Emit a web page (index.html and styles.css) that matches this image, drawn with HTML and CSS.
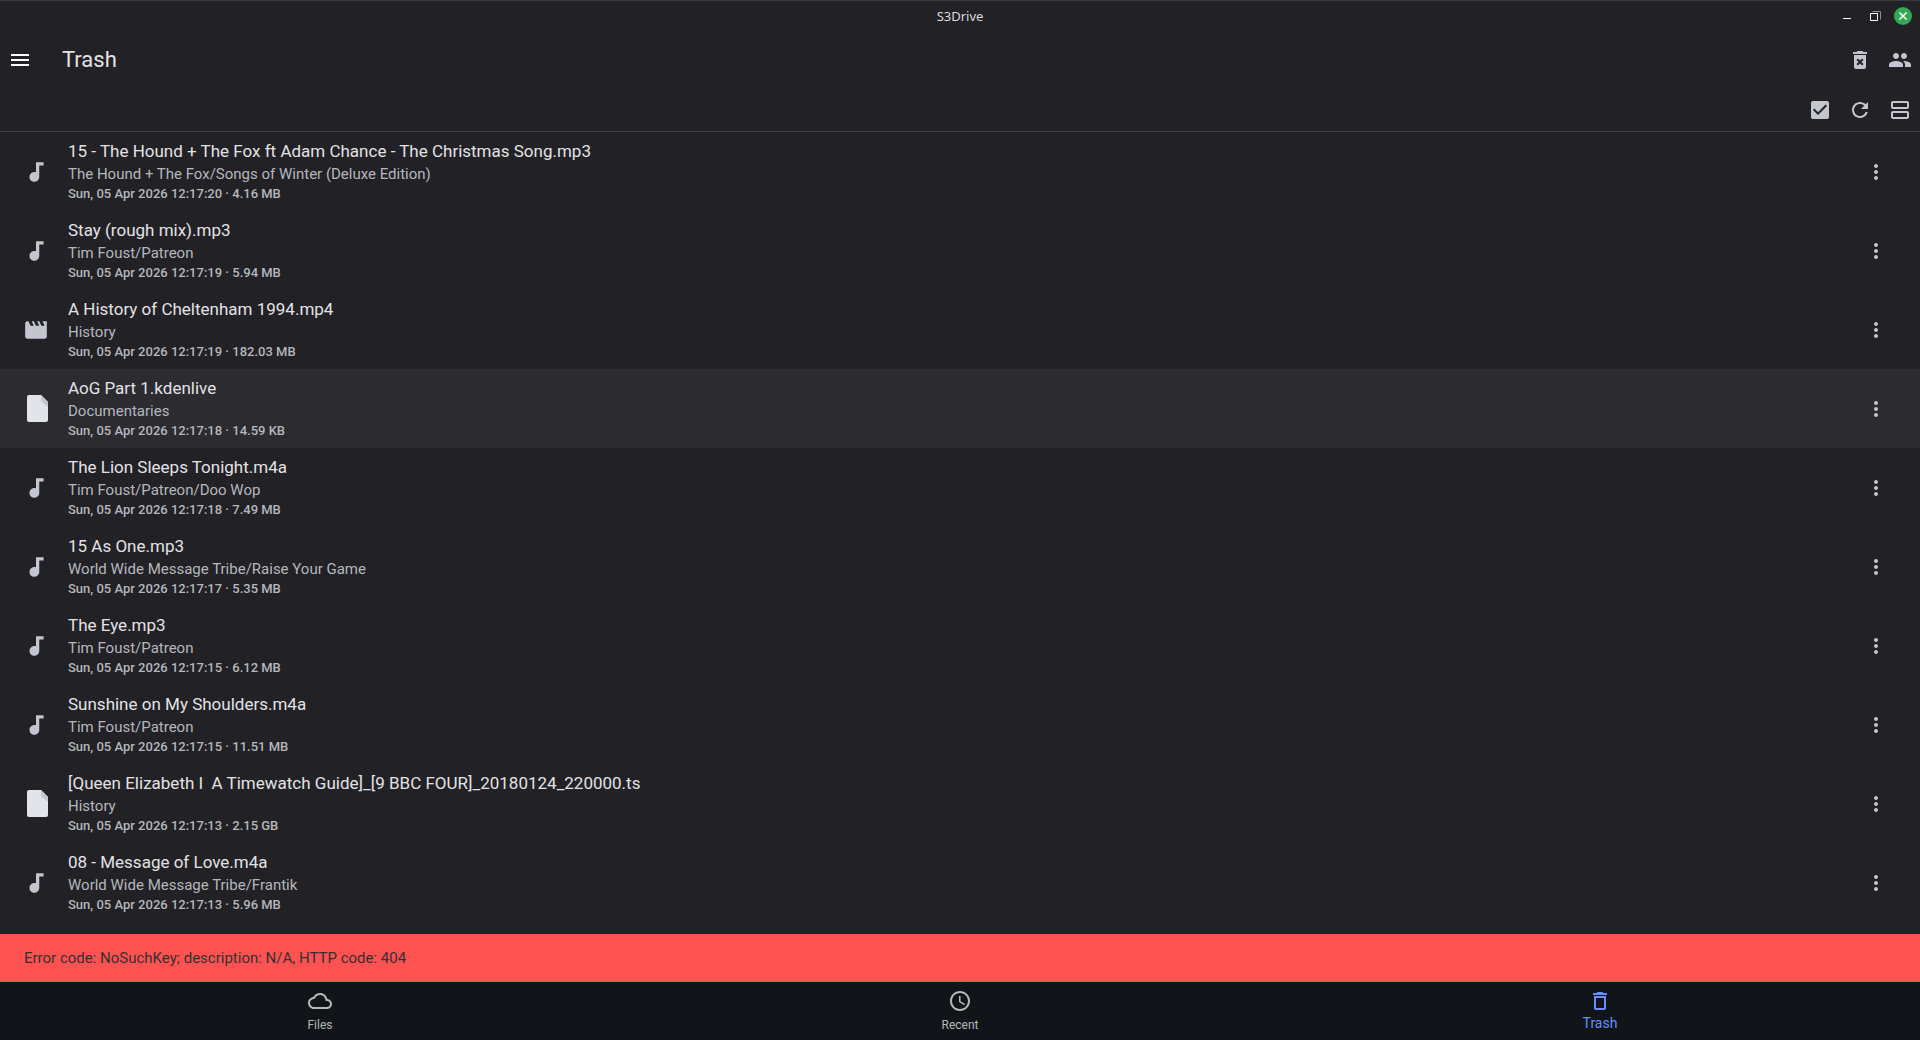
FILE: index.html
```html
<!DOCTYPE html>
<html lang="en">
  <head>
    <meta charset="UTF-8" />
    <meta name="viewport" content="width=device-width, initial-scale=1.0" />
    <title>S3Drive</title>
    <link rel="stylesheet" href="styles.css">
  </head>
  <body>
    <!-- Icons shared by the rows -->
    <svg class="sprite" aria-hidden="true">
      <symbol id="audio" viewBox="0 0 24 24">
        <path d="M12 3v9.28c-.47-.17-.97-.28-1.5-.28C8.01 12 6 14.01 6 16.5S8.01 21 10.5 21c2.31 0 4.2-1.75 4.45-4H15V6h4V3h-7z" />
      </symbol>
      <symbol id="movie" viewBox="0 0 24 24">
        <path d="M18 4l2 4h-3l-2-4h-2l2 4h-3l-2-4H8l2 4H7L5 4H4c-1.1 0-1.99.9-1.99 2L2 18c0 1.1.9 2 2 2h16c1.1 0 2-.9 2-2V4h-4z" />
      </symbol>
      <symbol id="file" viewBox="0 0 21 27">
        <path d="M2 0h12l7 7v18a2 2 0 0 1-2 2H2a2 2 0 0 1-2-2V2a2 2 0 0 1 2-2z" fill="#e1e5e9" />
        <path d="M14 0l7 7v5l-7-6z" fill="#c3c8d2" />
      </symbol>
      <symbol id="dots" viewBox="0 0 24 24">
        <path d="M12 8c1.1 0 2-.9 2-2s-.9-2-2-2-2 .9-2 2 .9 2 2 2zm0 2c-1.1 0-2 .9-2 2s.9 2 2 2 2-.9 2-2-.9-2-2-2zm0 6c-1.1 0-2 .9-2 2s.9 2 2 2 2-.9 2-2-.9-2-2-2z" />
      </symbol>
    </svg>

    <div class="titlebar">
      <span class="window-title">S3Drive</span>
      <div class="window-buttons">
        <button type="button" aria-label="Minimize">
          <svg width="18" height="18" viewBox="0 0 18 18"><path d="M5 11h8v1H5z" /></svg>
        </button>
        <button type="button" aria-label="Restore">
          <svg width="18" height="18" viewBox="0 0 18 18">
            <path d="M6.500 4.500h8v8" fill="none" stroke="#8b8b8f" />
            <path d="M4.500 6.500h7v7h-7z" fill="none" stroke="#ffffff" />
          </svg>
        </button>
        <button type="button" aria-label="Close">
          <svg width="18" height="18" viewBox="0 0 18 18">
            <circle cx="9" cy="9" r="9" fill="#33a852" />
            <path d="M5.500 5.500l7 7M12.500 5.500l-7 7" stroke="#ffffff" stroke-width="1.500" />
          </svg>
        </button>
      </div>
    </div>

    <header>
      <div class="bar">
        <button type="button" class="icon-button menu" aria-label="Open menu">
          <svg viewBox="0 0 24 24"><path d="M3 18h18v-2H3v2zm0-5h18v-2H3v2zm0-7v2h18V6H3z" /></svg>
        </button>
        <h1>Trash</h1>
        <button type="button" class="icon-button" aria-label="Empty trash">
          <svg viewBox="0 0 24 24">
            <path fill-rule="evenodd" d="M6 19c0 1.100.9 2 2 2h8c1.100 0 2-.9 2-2V7H6v12zM8.460 11.880l1.410-1.410L12 12.590l2.120-2.120 1.410 1.410L13.410 14l2.120 2.120-1.410 1.410L12 15.410l-2.120 2.120-1.410-1.410L10.590 14l-2.130-2.120zM15.500 4l-1-1h-5l-1 1H5v2h14V4z" />
          </svg>
        </button>
        <button type="button" class="icon-button" aria-label="Shared">
          <svg viewBox="0 0 24 24">
            <path d="M16 11c1.660 0 2.990-1.340 2.990-3S17.660 5 16 5c-1.660 0-3 1.340-3 3s1.340 3 3 3zm-8 0c1.660 0 2.990-1.340 2.990-3S9.660 5 8 5C6.340 5 5 6.340 5 8s1.340 3 3 3zm0 2c-2.330 0-7 1.170-7 3.500V19h14v-2.500c0-2.330-4.670-3.500-7-3.500zm8 0c-.29 0-.62.02-.97.05 1.160.84 1.970 1.970 1.970 3.450V19h6v-2.500c0-2.330-4.670-3.500-7-3.500z" />
          </svg>
        </button>
      </div>
      <div class="bar tools">
        <label class="icon-button">
          <input type="checkbox" aria-label="Select all" checked />
          <svg viewBox="0 0 24 24">
            <path d="M19 3H5c-1.110 0-2 .9-2 2v14c0 1.100.89 2 2 2h14c1.110 0 2-.9 2-2V5c0-1.100-.89-2-2-2zm-9 14l-5-5 1.410-1.410L10 14.170l7.590-7.590L19 8l-9 9z" />
          </svg>
        </label>
        <button type="button" class="icon-button" aria-label="Refresh">
          <svg viewBox="0 0 24 24">
            <path d="M17.650 6.350C16.200 4.900 14.210 4 12 4c-4.420 0-7.990 3.580-7.990 8s3.570 8 7.990 8c3.730 0 6.840-2.550 7.730-6h-2.080c-.82 2.330-3.040 4-5.650 4-3.310 0-6-2.690-6-6s2.690-6 6-6c1.660 0 3.140.69 4.220 1.780L13 11h7V4l-2.350 2.350z" />
          </svg>
        </button>
        <button type="button" class="icon-button" aria-label="Change view">
          <svg viewBox="0 0 24 24">
            <path fill-rule="evenodd" d="M19 13H5c-1.100 0-2 .9-2 2v4c0 1.100.9 2 2 2h14c1.100 0 2-.9 2-2v-4c0-1.100-.9-2-2-2zm0 6H5v-4h14v4zM19 3H5c-1.100 0-2 .9-2 2v4c0 1.100.9 2 2 2h14c1.100 0 2-.9 2-2V5c0-1.100-.9-2-2-2zm0 6H5V5h14v4z" />
          </svg>
        </button>
      </div>
    </header>

    <main>
      <ul class="file-list">
        <li>
          <svg class="type"><use href="#audio" /></svg>
          <div class="info">
            <h2>15 - The Hound + The Fox ft Adam Chance - The Christmas Song.mp3</h2>
            <p class="folder">The Hound + The Fox/Songs of Winter (Deluxe Edition)</p>
            <p class="details">Sun, 05 Apr 2026 12:17:20 · 4.16 MB</p>
          </div>
          <button type="button" class="icon-button" aria-label="More"><svg><use href="#dots" /></svg></button>
        </li>
        <li>
          <svg class="type"><use href="#audio" /></svg>
          <div class="info">
            <h2>Stay (rough mix).mp3</h2>
            <p class="folder">Tim Foust/Patreon</p>
            <p class="details">Sun, 05 Apr 2026 12:17:19 · 5.94 MB</p>
          </div>
          <button type="button" class="icon-button" aria-label="More"><svg><use href="#dots" /></svg></button>
        </li>
        <li>
          <svg class="type"><use href="#movie" /></svg>
          <div class="info">
            <h2>A History of Cheltenham 1994.mp4</h2>
            <p class="folder">History</p>
            <p class="details">Sun, 05 Apr 2026 12:17:19 · 182.03 MB</p>
          </div>
          <button type="button" class="icon-button" aria-label="More"><svg><use href="#dots" /></svg></button>
        </li>
        <li class="active">
          <svg class="type document"><use href="#file" /></svg>
          <div class="info">
            <h2>AoG Part 1.kdenlive</h2>
            <p class="folder">Documentaries</p>
            <p class="details">Sun, 05 Apr 2026 12:17:18 · 14.59 KB</p>
          </div>
          <button type="button" class="icon-button" aria-label="More"><svg><use href="#dots" /></svg></button>
        </li>
        <li>
          <svg class="type"><use href="#audio" /></svg>
          <div class="info">
            <h2>The Lion Sleeps Tonight.m4a</h2>
            <p class="folder">Tim Foust/Patreon/Doo Wop</p>
            <p class="details">Sun, 05 Apr 2026 12:17:18 · 7.49 MB</p>
          </div>
          <button type="button" class="icon-button" aria-label="More"><svg><use href="#dots" /></svg></button>
        </li>
        <li>
          <svg class="type"><use href="#audio" /></svg>
          <div class="info">
            <h2>15 As One.mp3</h2>
            <p class="folder">World Wide Message Tribe/Raise Your Game</p>
            <p class="details">Sun, 05 Apr 2026 12:17:17 · 5.35 MB</p>
          </div>
          <button type="button" class="icon-button" aria-label="More"><svg><use href="#dots" /></svg></button>
        </li>
        <li>
          <svg class="type"><use href="#audio" /></svg>
          <div class="info">
            <h2>The Eye.mp3</h2>
            <p class="folder">Tim Foust/Patreon</p>
            <p class="details">Sun, 05 Apr 2026 12:17:15 · 6.12 MB</p>
          </div>
          <button type="button" class="icon-button" aria-label="More"><svg><use href="#dots" /></svg></button>
        </li>
        <li>
          <svg class="type"><use href="#audio" /></svg>
          <div class="info">
            <h2>Sunshine on My Shoulders.m4a</h2>
            <p class="folder">Tim Foust/Patreon</p>
            <p class="details">Sun, 05 Apr 2026 12:17:15 · 11.51 MB</p>
          </div>
          <button type="button" class="icon-button" aria-label="More"><svg><use href="#dots" /></svg></button>
        </li>
        <li>
          <svg class="type document"><use href="#file" /></svg>
          <div class="info">
            <h2>[Queen Elizabeth I  A Timewatch Guide]_[9 BBC FOUR]_20180124_220000.ts</h2>
            <p class="folder">History</p>
            <p class="details">Sun, 05 Apr 2026 12:17:13 · 2.15 GB</p>
          </div>
          <button type="button" class="icon-button" aria-label="More"><svg><use href="#dots" /></svg></button>
        </li>
        <li>
          <svg class="type"><use href="#audio" /></svg>
          <div class="info">
            <h2>08 - Message of Love.m4a</h2>
            <p class="folder">World Wide Message Tribe/Frantik</p>
            <p class="details">Sun, 05 Apr 2026 12:17:13 · 5.96 MB</p>
          </div>
          <button type="button" class="icon-button" aria-label="More"><svg><use href="#dots" /></svg></button>
        </li>
      </ul>
    </main>

    <div class="error" role="alert">Error code: NoSuchKey; description: N/A, HTTP code: 404</div>

    <nav>
      <a href="#files">
        <svg viewBox="0 0 24 24">
          <path d="M19.350 10.040C18.670 6.590 15.640 4 12 4 9.110 4 6.600 5.640 5.350 8.040 2.340 8.360 0 10.910 0 14c0 3.310 2.690 6 6 6h13c2.760 0 5-2.240 5-5 0-2.640-2.050-4.780-4.650-4.960zM19 18H6c-2.210 0-4-1.790-4-4 0-2.050 1.530-3.760 3.560-3.970l1.070-.11.5-.95C8.080 7.140 9.940 6 12 6c2.620 0 4.880 1.860 5.390 4.430l.3 1.500 1.530.11c1.560.1 2.780 1.410 2.780 2.960 0 1.650-1.350 3-3 3z" />
        </svg>
        Files
      </a>
      <a href="#recent">
        <svg viewBox="0 0 24 24">
          <path d="M11.990 2C6.470 2 2 6.480 2 12s4.470 10 9.990 10C17.520 22 22 17.520 22 12S17.520 2 11.990 2zM12 20c-4.420 0-8-3.580-8-8s3.580-8 8-8 8 3.580 8 8-3.580 8-8 8zm.5-13H11v6l5.250 3.150.75-1.230-4.500-2.670z" />
        </svg>
        Recent
      </a>
      <a href="#trash" class="current" aria-current="page">
        <svg viewBox="0 0 24 24">
          <path d="M6 19c0 1.100.9 2 2 2h8c1.100 0 2-.9 2-2V7H6v12zM8 9h8v10H8V9zm7.500-5l-1-1h-5l-1 1H5v2h14V4z" />
        </svg>
        Trash
      </a>
    </nav>
  </body>
</html>
```
FILE: styles.css
```css
/* General Reset */
* {
  margin: 0;
  padding: 0;
  box-sizing: border-box;
}

body {
  display: flex;
  flex-direction: column;
  height: 100vh;
  background-color: #222126;
  color: #e2e2e6;
  font-family: Roboto, sans-serif;
}

.sprite {
  display: none;
}

button {
  background: none;
  border: none;
  color: inherit;
  cursor: pointer;
}

svg {
  display: block;
  fill: currentColor;
}

/* Window title bar */
.titlebar {
  display: grid;
  grid-template-columns: 1fr auto 1fr;
  align-items: center;
  height: 32px;
  padding: 0 8px 1px;
  border-top: 1px solid #3c3c3c;
}

.window-title {
  grid-column: 2;
  font-family: "Noto Sans", sans-serif;
  font-size: 13px;
  color: #dddddd;
}

.window-buttons {
  display: flex;
  justify-content: flex-end;
  gap: 10px;
  color: #ffffff;
}

/* Header Styling */
header {
  border-bottom: 1px solid #3e3e42;
}

.bar {
  display: flex;
  align-items: center;
  height: 56px;
  color: #c3c6cf;
}

.tools {
  justify-content: flex-end;
  height: 43px;
}

h1 {
  flex-grow: 1;
  padding: 0 0 2px 22px;
  font-size: 22px;
  font-weight: 400;
  color: #e2e2e6;
}

.icon-button {
  display: flex;
  align-items: center;
  justify-content: center;
  width: 40px;
  height: 40px;
  color: #c3c6cf;
  cursor: pointer;
}

.icon-button svg {
  width: 24px;
  height: 24px;
}

.icon-button input {
  appearance: none;
}

.menu {
  color: #ffffff;
}

/* File list */
main {
  flex: 1;
  min-height: 0;
  overflow: hidden;
}

.file-list {
  list-style: none;
}

.file-list li {
  display: flex;
  align-items: center;
  height: 79px;
  padding: 0 24px 0 23px;
}

.file-list .active {
  background-color: #2c2b30;
}

.type {
  width: 26px;
  height: 26px;
  color: #c3c6cf;
}

.document {
  width: 29px;
  height: 27px;
}

.info {
  flex: 1;
  padding: 0 0 2px 19px;
}

.document + .info {
  padding-left: 16px;
}

h2 {
  font-size: 17px;
  font-weight: 400;
  line-height: 24px;
  white-space: pre;
}

.folder {
  font-size: 15px;
  line-height: 22px;
  color: #b4b7bd;
}

.details {
  font-size: 13px;
  font-weight: 500;
  line-height: 18px;
  color: #b4b7bd;
}

/* Error message */
.error {
  padding: 0 24px;
  background-color: #ff5252;
  color: #38302f;
  font-size: 15px;
  line-height: 48px;
}

/* Bottom navigation */
nav {
  display: flex;
  height: 58px;
  background-color: #111418;
}

nav a {
  flex: 1;
  display: flex;
  flex-direction: column;
  align-items: center;
  padding-top: 7px;
  color: #b8b8ba;
  font-size: 12px;
  line-height: 24px;
  text-decoration: none;
}

nav svg {
  width: 24px;
  height: 24px;
}

nav .current {
  color: #6690ff;
  font-size: 14px;
  line-height: 20px;
}
```
